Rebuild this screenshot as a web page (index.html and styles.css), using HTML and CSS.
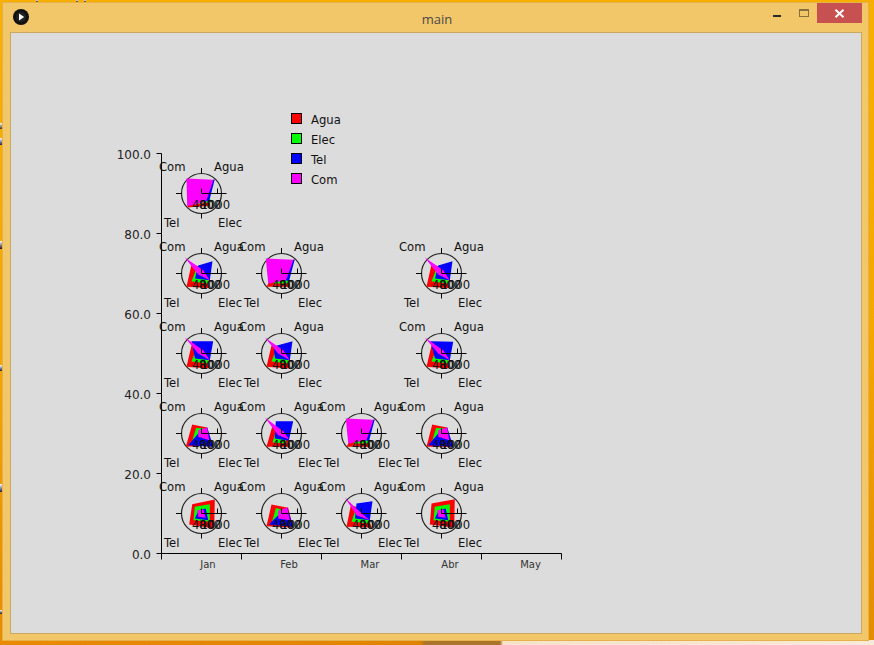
FILE: index.html
```html
<!DOCTYPE html>
<html lang="en">
<head>
<meta charset="utf-8">
<title>main</title>
<link rel="stylesheet" href="styles.css">
</head>
<body>
<div class="window">
  <header class="titlebar">
    <svg class="app-icon" width="16" height="16" viewBox="0 0 16 16"><circle cx="8" cy="8" r="8" fill="#111"/><circle cx="8" cy="8" r="5" fill="#222"/><path d="M6 4.6 11.2 8 6 11.4Z" fill="#fff"/></svg>
    <div class="title">main</div>
    <div class="controls">
      <div class="ctl"><span class="min-bar"></span></div>
      <div class="ctl"><span class="max-box"></span></div>
      <div class="ctl ctl-close"><svg width="11" height="9" viewBox="0 0 11 9"><path d="M1.5 .8 9.5 8.2M9.5 .8 1.5 8.2" stroke="#fff" stroke-width="2" fill="none"/></svg></div>
    </div>
  </header>
  <main class="panel">
    <svg class="chart" width="849" height="600" viewBox="11 33 849 600">
      <defs>
        <g id="ring"><circle r="20" class="ring"/></g>
        <g id="frame">
          <path class="axis" d="M0-25.5V-20.5M0 20V25M-25.5 0H-20M0 0H25M0 0V-5M16 0V-5"/>
          <text class="lab" x="12.5" y="-22.8">Agua</text>
          <text class="lab" x="16.5" y="33.5">Elec</text>
          <text class="lab" x="-37.5" y="33.5">Tel</text>
          <text class="lab" x="-42.5" y="-22.8">Com</text>
          <text class="val" x="-9.5" y="15.5">400</text>
          <text class="val" x="-2.5" y="15.5">800</text>
          <text class="val" x="-1" y="15.5">1000</text>
        </g>
      </defs>

      <path class="axis" d="M161.5 153.5V553.5H561.5M156.5 153.5H161.5M156.5 233.5H161.5M156.5 313.5H161.5M156.5 393.5H161.5M156.5 473.5H161.5M156.5 553.5H161.5M161.5 553.5V559.5M241.5 553.5V559.5M321.5 553.5V559.5M401.5 553.5V559.5M481.5 553.5V559.5M561.5 553.5V559.5"/>
      <text class="ylab" x="151" y="159">100.0</text>
      <text class="ylab" x="151" y="239">80.0</text>
      <text class="ylab" x="151" y="319">60.0</text>
      <text class="ylab" x="151" y="399">40.0</text>
      <text class="ylab" x="151" y="479">20.0</text>
      <text class="ylab" x="151" y="559">0.0</text>
      <text class="xlab" x="208" y="568">Jan</text>
      <text class="xlab" x="289" y="568">Feb</text>
      <text class="xlab" x="370" y="568">Mar</text>
      <text class="xlab" x="450" y="568">Abr</text>
      <text class="xlab" x="530.5" y="568">May</text>

      <rect class="red swatch" x="291.5" y="113.5" width="10" height="10"/>
      <rect class="green swatch" x="291.5" y="133.5" width="10" height="10"/>
      <rect class="blue swatch" x="291.5" y="153.5" width="10" height="10"/>
      <rect class="magenta swatch" x="291.5" y="173.5" width="10" height="10"/>
      <text class="lab" x="311" y="123.5">Agua</text>
      <text class="lab" x="311" y="143.5">Elec</text>
      <text class="lab" x="311" y="163.5">Tel</text>
      <text class="lab" x="311" y="183.5">Com</text>

      <!-- Jan 90 -->
      <g transform="translate(201.5 193.5)"><use href="#ring"/>
        <polygon class="red" points="-3,-8 6,-5 8.3,12.3 -14.3,14"/>
        <polygon class="green" points="-2,-6 5,-4 10,8.5 -8,11"/>
        <polygon class="blue" points="-3,-8 13.3,-14.3 7.5,8.3 -7,5"/>
        <polygon class="magenta" points="-15,-15 12,-13.8 4.5,8.3 -14.3,12.7"/>
        <use href="#frame"/></g>
      <!-- Jan 70 -->
      <g transform="translate(201.5 273.5)"><use href="#ring"/>
        <polygon class="red" points="-10,-9 5,-5 6.7,14.5 -15,13.3"/>
        <polygon class="green" points="-5,-5 4,-4 6.7,10 -10,8"/>
        <polygon class="blue" points="-3.3,-8 11,-12.3 8.3,6.7 -6.5,5"/>
        <polygon class="magenta" points="-16.7,-16 1.7,-3.3 8.3,6.7 -3.3,1"/>
        <use href="#frame"/></g>
      <!-- Feb 70 -->
      <g transform="translate(281.5 273.5)"><use href="#ring"/>
        <polygon class="red" points="-3,-8 6,-5 8.3,13.3 -15,13.3"/>
        <polygon class="green" points="-2,-6 5,-4 8.3,10 -8,10"/>
        <polygon class="blue" points="-3,-8 13.3,-14.3 7.5,7.5 -7,5"/>
        <polygon class="magenta" points="-15.7,-15 12,-13.8 4.5,6.7 -13.3,10"/>
        <use href="#frame"/></g>
      <!-- Abr 70 -->
      <g transform="translate(441.5 273.5)"><use href="#ring"/>
        <polygon class="red" points="-10,-9 5,-5 6.7,14.5 -15,13.3"/>
        <polygon class="green" points="-5,-5 4,-4 6.7,10 -10,8"/>
        <polygon class="blue" points="-3.3,-8 11,-12.3 8.3,6.7 -6.5,5"/>
        <polygon class="magenta" points="-16.7,-16 1.7,-3.3 8.3,6.7 -3.3,1"/>
        <use href="#frame"/></g>
      <!-- Jan 50 -->
      <g transform="translate(201.5 353.5)"><use href="#ring"/>
        <polygon class="red" points="-10,-8 5,-5 6.7,15 -15,13.3"/>
        <polygon class="green" points="-5,-5 4,-4 6.7,10 -10,8"/>
        <polygon class="blue" points="-10,-12.3 11.7,-12.3 8.3,6.7 -6.5,5"/>
        <polygon class="magenta" points="-16.7,-16 1.7,-3.3 8.3,6.7 -3.3,0"/>
        <use href="#frame"/></g>
      <!-- Feb 50 -->
      <g transform="translate(281.5 353.5)"><use href="#ring"/>
        <polygon class="red" points="-10,-8 5,-5 8,15 -15,13.3"/>
        <polygon class="green" points="-5,-5 4,-4 7,10 -10,8"/>
        <polygon class="blue" points="-8,-7 11,-12.3 8.3,6.7 -6.5,5"/>
        <polygon class="magenta" points="-16.7,-16 1.7,-3.3 8.3,6.7 -3.3,0"/>
        <use href="#frame"/></g>
      <!-- Abr 50 -->
      <g transform="translate(441.5 353.5)"><use href="#ring"/>
        <polygon class="red" points="-10,-8 5,-5 7,15 -15,13.3"/>
        <polygon class="green" points="-5,-5 4,-4 6.7,10 -10,8"/>
        <polygon class="blue" points="-11,-12.3 11.7,-11.7 8.3,6.7 -6.5,5"/>
        <polygon class="magenta" points="-16.7,-16 1.7,-3.3 8.3,6.7 -3.3,0"/>
        <use href="#frame"/></g>
      <!-- Jan 30 -->
      <g transform="translate(201.5 433.5)"><use href="#ring"/>
        <polygon class="red" points="-9.3,-9 5.7,-6 10,11.7 -15.7,13.3"/>
        <polygon class="green" points="-5.5,-5.5 3.3,-5 6.7,10 -10,10"/>
        <polygon class="blue" points="-1.7,-1.7 5.7,-6 11.7,13.3 -13.3,11.7"/>
        <polygon class="magenta" points="-3.3,-3.3 5.7,-6 7.7,6.7 -3.3,3.3"/>
        <use href="#frame"/></g>
      <!-- Feb 30 -->
      <g transform="translate(281.5 433.5)"><use href="#ring"/>
        <polygon class="red" points="-9,-8 5,-5 8.3,13.3 -15,13.3"/>
        <polygon class="green" points="-5,-4 3,-3 5,10 -9,9"/>
        <polygon class="blue" points="-5.7,-12.3 11.7,-12.3 7.3,7.3 -6.7,5"/>
        <polygon class="magenta" points="-16.7,-16 1.7,-2.3 7.7,6 -3.3,1.7"/>
        <use href="#frame"/></g>
      <!-- Mar 30 -->
      <g transform="translate(361.5 433.5)"><use href="#ring"/>
        <polygon class="red" points="-3,-8 6,-5 8.3,13.3 -15,13.3"/>
        <polygon class="green" points="-2,-6 5,-4 8.3,10 -8,10"/>
        <polygon class="blue" points="-3,-8 13.3,-14.3 7.5,7.5 -7,5"/>
        <polygon class="magenta" points="-15.7,-15 12,-13.8 5,6.7 -13.3,10"/>
        <use href="#frame"/></g>
      <!-- Abr 30 -->
      <g transform="translate(441.5 433.5)"><use href="#ring"/>
        <polygon class="red" points="-9.3,-9 5.7,-6 10.5,13.3 -15,13.3"/>
        <polygon class="green" points="-5.5,-5.5 3.3,-5 6.7,10 -10,10"/>
        <polygon class="blue" points="-1.7,-1.7 5.7,-6 11.7,13.3 -13.3,11.7"/>
        <polygon class="magenta" points="-3.3,-3.3 5.7,-6 7.7,6.7 -3.3,3.3"/>
        <use href="#frame"/></g>
      <!-- Jan 10 -->
      <g transform="translate(201.5 513.5)"><use href="#ring"/>
        <polygon class="red" points="-9.3,-9.3 13.3,-14 12.7,15 -12.3,11"/>
        <polygon class="green" points="-6.7,-6.7 8.3,-9.3 8.3,8.3 -8,6.7"/>
        <polygon class="blue" points="-2.7,-3.3 4.3,-5 6.7,6.7 -6.7,5"/>
        <polygon class="magenta" points="-4.3,-3.3 1.7,-4 4.3,4.3 -3.3,3.3"/>
        <use href="#frame"/></g>
      <!-- Feb 10 -->
      <g transform="translate(281.5 513.5)"><use href="#ring"/>
        <polygon class="red" points="-10,-9 6.7,-5.7 11.7,14 -15,12.7"/>
        <polygon class="green" points="-5.5,-5.5 3,-3 6.7,10 -10,10"/>
        <polygon class="blue" points="-3.3,1.7 5.7,-6 11.7,13.3 -12.7,11"/>
        <polygon class="magenta" points="-3.3,-2.7 5.7,-6 8.3,6.7 -3.3,5"/>
        <use href="#frame"/></g>
      <!-- Mar 10 -->
      <g transform="translate(361.5 513.5)"><use href="#ring"/>
        <polygon class="red" points="-10.7,-8 3.3,-5 10,14 -15,13.3"/>
        <polygon class="green" points="-5.5,-5 3,-4 8.3,10 -10,8.3"/>
        <polygon class="blue" points="-5,-10 11,-12.3 8.3,6.7 -6.5,5"/>
        <polygon class="magenta" points="-16.7,-16 -3.3,-3.3 8.3,6.7 -5,1.7"/>
        <use href="#frame"/></g>
      <!-- Abr 10 -->
      <g transform="translate(441.5 513.5)"><use href="#ring"/>
        <polygon class="red" points="-10,-10 13.3,-14.3 12.7,14 -11.7,11"/>
        <polygon class="green" points="-6.7,-6.7 8.3,-9.3 8.3,8.3 -8,6.7"/>
        <polygon class="blue" points="-2.7,-3.3 4.3,-5 6.7,6.7 -6.7,5"/>
        <polygon class="magenta" points="-4.3,-3.3 1.7,-4 4.3,4.3 -3.3,3.3"/>
        <use href="#frame"/></g>
    </svg>
  </main>
</div>
</body>
</html>
```

FILE: styles.css
```css
* { box-sizing: border-box; }
html, body { margin: 0; height: 100%; }
body {
  width: 874px;
  height: 645px;
  overflow: hidden;
  padding: 3px 6px 5px 3px;
  display: flex;
  background:
    linear-gradient(#fff, #223) 36px 0 / 2px 2px no-repeat,
    linear-gradient(#fff, #223) 76px 0 / 2px 2px no-repeat,
    linear-gradient(#fff, #223) 84px 0 / 2px 2px no-repeat,
    linear-gradient(#ffe, #432) 0 123px / 2px 6px no-repeat,
    linear-gradient(#fff, #224) 0 138px / 2px 7px no-repeat,
    linear-gradient(#fff, #211) 0 241px / 2px 8px no-repeat,
    linear-gradient(#fff, #224) 0 365px / 2px 6px no-repeat,
    linear-gradient(#fff, #224) 0 484px / 2px 8px no-repeat,
    linear-gradient(#fff, #211) 0 610px / 2px 4px no-repeat,
    linear-gradient(90deg, #e98a00 0, #e08400 420px, #a8752a 425px, #a8752a 500px, #f6e3c8 503px, #f8ead8 874px) 0 100% / 100% 5px no-repeat,
    linear-gradient(#f7b000 0, #f5a800 50%, #e48c00 100%);
}
.window {
  flex: 1;
  display: flex;
  flex-direction: column;
  padding: 0 6px 6px 7px;
  background: #f1c769;
  box-shadow: 0 0 0 1px #e6b04a;
}
.titlebar {
  height: 29px;
  flex: none;
  display: grid;
  grid-template-columns: 1fr auto 1fr;
  align-items: start;
}
.app-icon { margin: 6px 0 0 3px; display: block; }
.title {
  font: 13px/16px "Open Sans", "Noto Sans", sans-serif;
  color: #4a4a4a;
  padding-top: 8px;
  margin-left: 2px;
}
.controls { display: flex; justify-content: flex-end; align-items: stretch; height: 20px; }
.ctl { width: 26px; display: flex; align-items: center; justify-content: center; }
.ctl-close { width: 45px; background: #c75050; }
.min-bar { width: 8px; height: 2px; background: #2b2b2b; margin: 6px 2px 0 0; }
.max-box { width: 10px; height: 8px; border: 1px solid #8a6f3e; border-top-width: 2px; }
.panel {
  flex: 1;
  background: #dcdcdc;
  border: 1px solid #c9a860;
  min-height: 0;
}
.chart { display: block; }
.axis { fill: none; stroke: #000; stroke-width: 1; }
.ring { fill: none; stroke: #222; stroke-width: 1.2; }
.lab { font: 11.6px "DejaVu Sans", sans-serif; fill: #111; }
.val { font: 11.6px "DejaVu Sans", sans-serif; fill: #111; }
.ylab { font: 12px "DejaVu Sans", sans-serif; fill: #222; text-anchor: end; }
.xlab { font: 10px "DejaVu Sans", sans-serif; fill: #333; text-anchor: middle; }
.red { fill: #f00; }
.green { fill: #0f0; }
.blue { fill: #00f; }
.magenta { fill: #f0f; }
.swatch { stroke: #000; stroke-width: 1; }
```
